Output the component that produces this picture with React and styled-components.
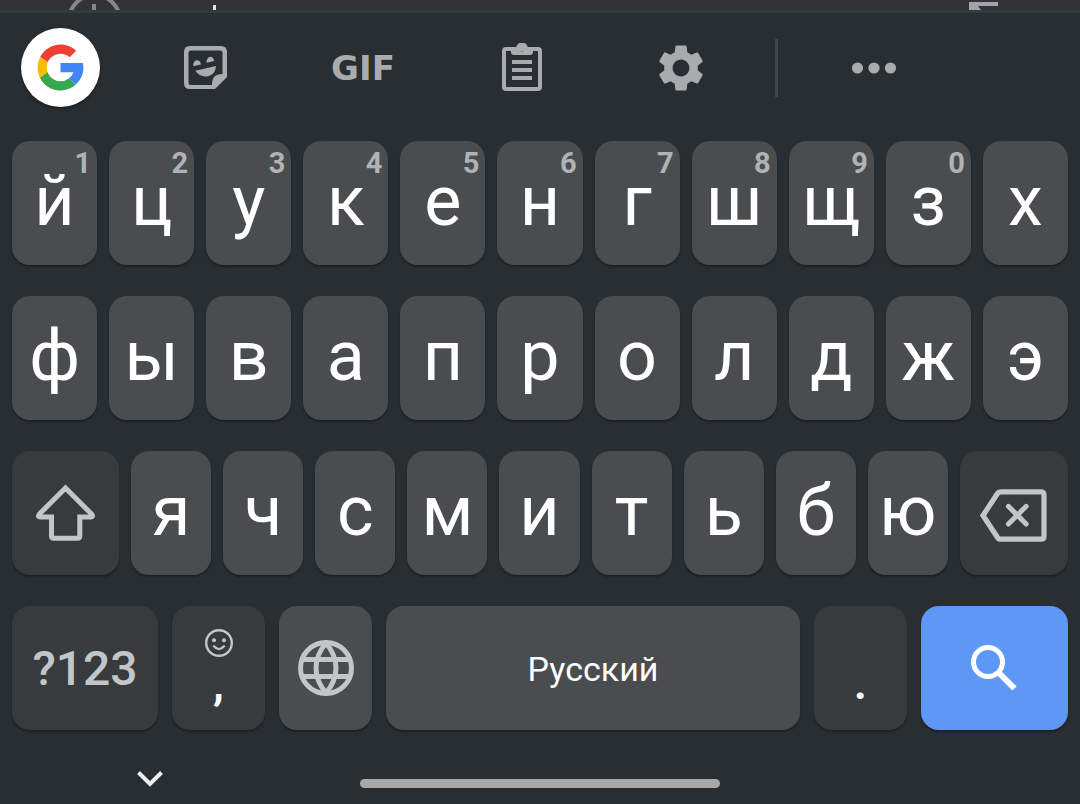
import React from 'react'
import styled, { createGlobalStyle } from 'styled-components'
import { MdSettings } from 'react-icons/md'

const GlobalStyle = createGlobalStyle`
    * { box-sizing: border-box; }
    body {
        margin: 0;
        background: #292e32;
        font-family: Roboto, "Noto Sans", sans-serif;
    }
    button {
        margin: 0;
        padding: 0;
        border: 0;
        background: none;
        color: inherit;
        font: inherit;
        cursor: pointer;
    }
    svg { display: block; flex: none; }
`

const Screen = styled.div`
    min-height: 100vh;
    background: #292e32;
`

const AppStrip = styled.div`
    display: flex;
    justify-content: space-between;
    height: 10px;
    padding: 0 82px 0 65px;
    overflow: hidden;
    background: #333337;
`

const Keyboard = styled.main`
    border-top: 3px solid #343a3f;
`

const Toolbar = styled.div`
    display: grid;
    grid-template-columns: 126fr 158fr 158fr 160fr 158fr 32fr 164fr 124fr;
    align-items: center;
    justify-items: center;
    height: 109px;
    margin-bottom: 19px;
    color: #a9abae;
`

const Tool = styled.button`
    display: flex;
    align-items: center;
    justify-content: center;
    min-width: 64px;
    height: 64px;
`

const GoogleButton = styled(Tool)`
    justify-self: start;
    width: 79px;
    height: 79px;
    margin-left: 21px;
    border-radius: 50%;
    background: #fff;
    box-shadow: 0 2px 3px rgba(0, 0, 0, 0.35);
`

const GifButton = styled(Tool)`
    font-family: "DejaVu Sans", sans-serif;
    font-size: 34px;
    font-weight: 700;
    line-height: 40px;
`

const Divider = styled.span`
    width: 3px;
    height: 58px;
    background: #42464d;
`

const Rows = styled.div`
    display: grid;
    gap: 31px;
    padding: 0 12px;
`

const Row = styled.div`
    display: grid;
    grid-template-columns: ${props => props.$columns};
    gap: ${props => props.$gap || 12}px;
`

const keyColors = {
    light: '#4a4d4f',
    dark: '#373b3e',
    blue: '#5e97f6'
}

const KeyButton = styled.button`
    position: relative;
    display: flex;
    align-items: center;
    justify-content: center;
    min-width: 0;
    height: 124px;
    border-radius: 18px;
    background: ${props => keyColors[props.$tone || 'light']};
    box-shadow: 0 2px 2px rgba(0, 0, 0, 0.3);
    color: #c3c6c9;
`

const LetterKey = styled(KeyButton)`
    padding-bottom: 4px;
    color: #fff;
    font-size: 70px;
    line-height: 82px;
`

const Hint = styled.span`
    position: absolute;
    top: 8px;
    right: 6px;
    color: #b0b3b5;
    font-size: 29px;
    font-weight: 700;
    line-height: 28px;
`

const SymbolsKey = styled(KeyButton)`
    font-size: 48px;
    font-weight: 500;
`

const SpaceKey = styled(KeyButton)`
    padding-top: 2px;
    color: #fff;
    font-size: 34px;
`

const PunctuationKey = styled(KeyButton)`
    flex-direction: column;
    justify-content: flex-end;
    gap: 5px;
    padding-bottom: 24px;
    color: #fff;
    font-size: 44px;
    font-weight: 700;
    line-height: 44px;

    svg {
        color: #c3c6c9;
    }
`

const NavBar = styled.nav`
    display: grid;
    grid-template-columns: 1fr 1fr 1fr;
    align-items: center;
    height: 74px;
    padding-top: 32px;
`

const HideButton = styled.button`
    display: flex;
    align-items: center;
    justify-content: center;
    justify-self: center;
    width: 48px;
    height: 32px;
    margin: 0 60px 8px 0;
    color: #eceeef;
`

const HomeHandle = styled.button`
    height: 9px;
    border-radius: 5px;
    background: #a6a8a9;
`

const topRow = [
    ['й', 1], ['ц', 2], ['у', 3], ['к', 4], ['е', 5], ['н', 6],
    ['г', 7], ['ш', 8], ['щ', 9], ['з', 0], ['х']
]
const homeRow = ['ф', 'ы', 'в', 'а', 'п', 'р', 'о', 'л', 'д', 'ж', 'э']
const bottomRow = ['я', 'ч', 'с', 'м', 'и', 'т', 'ь', 'б', 'ю']

function GoogleLogo() {
    return (
        <svg width="55" height="55" viewBox="0 0 48 48" aria-hidden="true">
            <path fill="#FBBC05" d="M4 24c0 11.045 8.955 20 20 20V36c-6.627 0-12-5.373-12-12 0-1.6.3-3.1.877-4.49L6.306 14.691A19.9 19.9 0 0 0 4 24z" />
            <path fill="#EA4335" d="M6.306 14.691l6.571 4.819C14.655 15.108 18.961 12 24 12c3.059 0 5.842 1.154 7.961 3.039l5.657-5.657C34.046 6.053 29.268 4 24 4 16.318 4 9.656 8.337 6.306 14.691z" />
            <path fill="#34A853" d="M24 44c5.166 0 9.86-1.977 13.409-5.192l-6.19-5.238A11.9 11.9 0 0 1 24 36c-5.202 0-9.619-3.317-11.283-7.946l-6.522 5.025C9.505 39.556 16.227 44 24 44z" />
            <path fill="#4285F4" d="M43.611 20.083H24v8h11.303a12.04 12.04 0 0 1-4.087 5.571l6.193 5.154C41.5 35.2 44 30 44 24c0-1.341-.138-2.65-.389-3.917z" />
        </svg>
    )
}

function StickerIcon() {
    return (
        <svg width="43" height="43" viewBox="0 0 43 43" fill="currentColor" aria-hidden="true">
            <path fillRule="evenodd" d="M6 0H37Q43 0 43 6V31L31 43H6Q0 43 0 37V6Q0 0 6 0ZM7 4.5Q4.500 4.500 4.500 7V36.500Q4.500 39 7 39H28Q27.500 28 38.500 28V7Q38.500 4.500 36 4.500Z" />
            <path d="M9.300 20.200A3.800 5 0 0 1 17 18.400Z" />
            <path d="M22.600 16.800A3.800 5 0 0 1 30.300 15Z" />
            <path d="M11.300 24.800L32 20Q31.500 28.500 24 30.200Q16 31.600 11.300 24.800Z" />
        </svg>
    )
}

function ClipboardIcon() {
    return (
        <svg width="40" height="50" viewBox="0 0 40 50" aria-hidden="true">
            <rect x="2" y="6" width="36" height="40" rx="2" fill="none" stroke="currentColor" strokeWidth="4" />
            <path fill="currentColor" fillRule="evenodd" d="M9 4H14.200A6 6 0 0 1 25.800 4H31V9Q31 12 28 12H12Q9 12 9 9ZM20 4A2.300 2.300 0 1 0 20 8.600A2.300 2.300 0 1 0 20 4Z" />
            <path d="M10 19H30M10 27H30M10 35H30" stroke="currentColor" strokeWidth="4" />
        </svg>
    )
}

function MoreIcon() {
    return (
        <svg width="46" height="12" viewBox="0 0 46 12" fill="currentColor" aria-hidden="true">
            <circle cx="6.500" cy="6" r="5.600" />
            <circle cx="23" cy="6" r="5.600" />
            <circle cx="39.500" cy="6" r="5.600" />
        </svg>
    )
}

function ShiftIcon() {
    return (
        <svg width="60" height="60" viewBox="0 0 60 60" fill="none" stroke="currentColor" strokeWidth="5" aria-hidden="true">
            <path d="M29.500 5L3.500 31Q1 34 4.500 34H15.500V53Q15.500 55.300 17.500 55.300H41.500Q43.800 55.300 43.800 53V34H54.500Q58 34 55.500 31Z" />
        </svg>
    )
}

function BackspaceIcon() {
    return (
        <svg width="67" height="58" viewBox="0 -5 67 58" fill="none" stroke="currentColor" aria-hidden="true">
            <path strokeWidth="5.200" d="M3 26.500L17.500 4.500Q18.600 2.800 21 2.800H61Q64 2.800 64 5.800V47.200Q64 50.200 61 50.200H21Q18.600 50.200 17.500 48.500Z" />
            <path strokeWidth="5" strokeLinecap="round" d="M28.400 17.300L46.200 35.100M46.200 17.300L28.400 35.100" />
        </svg>
    )
}

function SmileyIcon() {
    return (
        <svg width="28" height="28" viewBox="0 0 28 28" fill="none" stroke="currentColor" strokeWidth="2.400" aria-hidden="true">
            <circle cx="14" cy="14" r="12.800" />
            <circle cx="9" cy="11.300" r="2" fill="currentColor" stroke="none" />
            <circle cx="19" cy="11.300" r="2" fill="currentColor" stroke="none" />
            <path strokeLinecap="round" d="M9 17.300Q14 23 19 17.300" />
        </svg>
    )
}

function GlobeIcon() {
    return (
        <svg width="56" height="56" viewBox="0 0 56 56" fill="none" stroke="currentColor" strokeWidth="5" aria-hidden="true">
            <circle cx="28" cy="28" r="25.500" />
            <path d="M28 3Q18 15 18 28T28 53Q38 41 38 28T28 3ZM5 19.400H51M5 36.600H51" />
        </svg>
    )
}

function SearchIcon() {
    return (
        <svg width="48" height="46" viewBox="0 0 48 46" fill="none" stroke="#fff" aria-hidden="true">
            <circle cx="17" cy="17" r="14.500" strokeWidth="5" />
            <path strokeWidth="6" d="M27 27L43.500 43.500" />
        </svg>
    )
}

function App() {
    return (
        <>
            <GlobalStyle />
            <Screen>
                <AppStrip>
                    <svg width="152" height="10" viewBox="0 0 152 10" aria-hidden="true">
                        <circle cx="29.500" cy="20.500" r="25.500" fill="none" stroke="#85868a" strokeWidth="4" />
                        <path d="M27 4H31V10H27Z" fill="#85868a" />
                        <path d="M148 5H151V10H148Z" fill="#e4e5e6" />
                    </svg>
                    <svg width="29" height="10" viewBox="0 0 29 10" aria-hidden="true">
                        <path d="M0 2H29V6H9L12 10H0Z" fill="#a1a3a8" />
                    </svg>
                </AppStrip>
                <Keyboard>
                    <Toolbar>
                        <GoogleButton aria-label="Google"><GoogleLogo /></GoogleButton>
                        <Tool aria-label="Стикеры"><StickerIcon /></Tool>
                        <GifButton>GIF</GifButton>
                        <Tool aria-label="Буфер обмена"><ClipboardIcon /></Tool>
                        <Tool aria-label="Настройки"><MdSettings size={56} /></Tool>
                        <Divider />
                        <Tool aria-label="Ещё"><MoreIcon /></Tool>
                    </Toolbar>
                    <Rows>
                        <Row $columns="repeat(11, 1fr)">
                            {topRow.map(([letter, hint]) => (
                                <LetterKey key={letter}>
                                    {letter}
                                    {hint !== undefined && <Hint>{hint}</Hint>}
                                </LetterKey>
                            ))}
                        </Row>
                        <Row $columns="repeat(11, 1fr)">
                            {homeRow.map(letter => <LetterKey key={letter}>{letter}</LetterKey>)}
                        </Row>
                        <Row $columns="107fr repeat(9, 80fr) 108fr">
                            <KeyButton $tone="dark" aria-label="Shift"><ShiftIcon /></KeyButton>
                            {bottomRow.map(letter => <LetterKey key={letter}>{letter}</LetterKey>)}
                            <KeyButton $tone="dark" aria-label="Удалить"><BackspaceIcon /></KeyButton>
                        </Row>
                        <Row $columns="146fr 93fr 93fr 414fr 93fr 147fr" $gap={14}>
                            <SymbolsKey $tone="dark">?123</SymbolsKey>
                            <PunctuationKey $tone="dark"><SmileyIcon />,</PunctuationKey>
                            <KeyButton aria-label="Язык"><GlobeIcon /></KeyButton>
                            <SpaceKey>Русский</SpaceKey>
                            <PunctuationKey $tone="dark">.</PunctuationKey>
                            <KeyButton $tone="blue" aria-label="Поиск"><SearchIcon /></KeyButton>
                        </Row>
                    </Rows>
                    <NavBar>
                        <HideButton aria-label="Скрыть клавиатуру">
                            <svg width="26" height="16" viewBox="0 0 26 16" fill="none" stroke="currentColor" strokeWidth="4" aria-hidden="true">
                                <path d="M1.500 1.500L13 13L24.500 1.500" />
                            </svg>
                        </HideButton>
                        <HomeHandle aria-label="Домой" />
                    </NavBar>
                </Keyboard>
            </Screen>
        </>
    )
}

export default App
